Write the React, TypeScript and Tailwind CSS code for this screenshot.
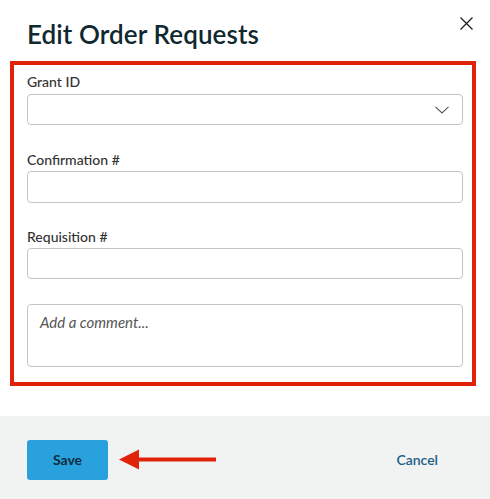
export default function App() {
  const font = { fontFamily: '"Lato", "Open Sans", sans-serif' };
  return (
    <div className="relative w-[490px] h-[499px] bg-white overflow-hidden" style={font}>
      {/* header */}
      <div className="relative h-[61px] px-[27px]">
        <h2 className="pt-[19px] text-[26px] leading-[30px] font-semibold text-[#10282f] tracking-[0.1px]">Edit Order Requests</h2>
        <button className="absolute left-[460px] top-[17px] w-[13px] h-[13px]">
          <svg width="13" height="13" viewBox="0 0 13 13" fill="none" stroke="#1a1a1a" strokeWidth="1.2">
            <path d="M0.5 0.5 L12.5 12.5 M12.5 0.5 L0.5 12.5" />
          </svg>
        </button>
      </div>

      {/* form */}
      <div className="flex flex-col px-[27px] pt-[11px] h-[355px]">
        <div className="flex flex-col gap-[2px]">
          <label className="text-[14px] leading-[20px] font-medium text-[#333]">Grant ID</label>
          <div className="flex items-center justify-end h-[31px] border border-[#c3c6c9] rounded-[4px] pr-[13px]">
            <svg width="14" height="8" viewBox="0 0 14 8" fill="none" stroke="#555" strokeWidth="1.1">
              <path d="M0.5 0.8 L7 7 L13.5 0.8" />
            </svg>
          </div>
        </div>
        <div className="flex flex-col gap-[1px] mt-[25px]">
          <label className="text-[14px] leading-[20px] font-medium text-[#333]">Confirmation #</label>
          <div className="h-[32px] border border-[#c3c6c9] rounded-[4px]" />
        </div>
        <div className="flex flex-col gap-[1px] mt-[24px]">
          <label className="text-[14px] leading-[20px] font-medium text-[#333]">Requisition #</label>
          <div className="h-[31px] border border-[#c3c6c9] rounded-[4px]" />
        </div>
        <div className="h-[63px] mt-[25px] border border-[#c3c6c9] rounded-[4px] px-[12px] pt-[5px]">
          <span className="text-[15px] leading-[20px] italic text-[#555]">Add a comment...</span>
        </div>
      </div>

      {/* footer */}
      <div className="flex items-center justify-between h-[83px] bg-[#f1f2f2] pl-[27px] pr-[52px] pt-[4px]">
        <button className="w-[81px] h-[40px] rounded-[3px] bg-[#28a1dc] text-[14px] font-bold text-[#0f2d42]">Save</button>
        <button className="text-[14px] font-semibold text-[#1b5f86]">Cancel</button>
      </div>

      {/* annotation: highlight box */}
      <div className="absolute left-[10px] top-[61px] w-[466px] h-[325px] border-4 border-[#e02208] pointer-events-none" />

      {/* annotation: arrow */}
      <svg className="absolute left-[119px] top-[449px]" width="100" height="21" viewBox="0 0 100 21">
        <path d="M0 10.5 L20 0.5 L20 20.5 Z" fill="#e02208" />
        <rect x="18" y="8.5" width="79" height="4" fill="#e02208" />
      </svg>
    </div>
  );
}
